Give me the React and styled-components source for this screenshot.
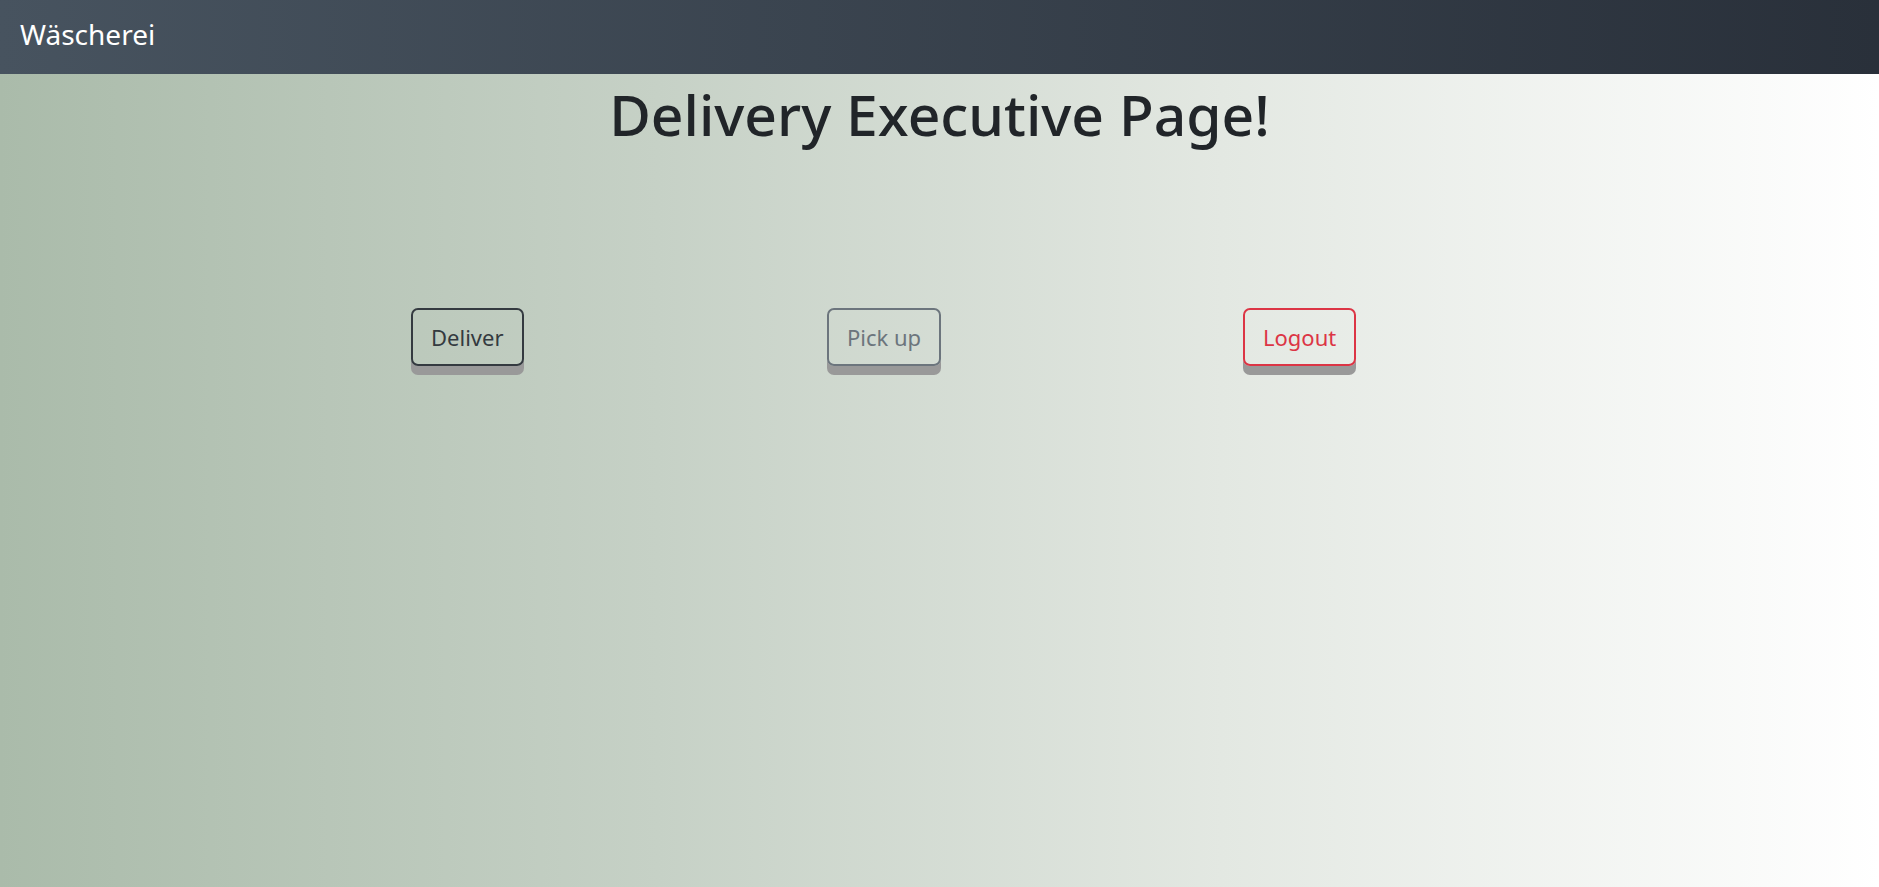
import React from "react";
import styled, { createGlobalStyle } from "styled-components";

const Global = createGlobalStyle`
  html, body { margin: 0; padding: 0; }
  body {
    font-family: "Noto Sans", "Open Sans", sans-serif;
    min-height: 887px;
    background: linear-gradient(to right, #aabbaa 0%, #c6d1c6 35%, #e3e8e2 65%, #ffffff 100%);
  }
`;

const Nav = styled.nav`
  height: 74px;
  display: flex;
  align-items: center;
  padding: 0 20px;
  box-sizing: border-box;
  background: linear-gradient(to right, #47535f, #29303a);
`;

const Brand = styled.span`
  color: #ffffff;
  font-size: 28px;
  line-height: 1;
  padding-bottom: 6px;
`;

const Title = styled.h1`
  margin: 6px 0 0;
  text-align: center;
  font-size: 57px;
  font-weight: 500;
  line-height: 1.2;
  color: #212529;
`;

const ButtonRow = styled.div`
  display: grid;
  grid-template-columns: repeat(3, 416px);
  padding-left: 411px;
  margin-top: 160px;
`;

const Button = styled.button`
  justify-self: start;
  font-family: inherit;
  font-size: 22px;
  line-height: 36px;
  padding: 9px 18px;
  background: transparent;
  border: 2px solid ${(p) => p.$color};
  color: ${(p) => p.$color};
  border-radius: 7px;
  box-shadow: 0 9px 0 #999999;
  cursor: pointer;
`;

export default function App() {
  return (
    <>
      <Global />
      <Nav>
        <Brand>Wäscherei</Brand>
      </Nav>
      <Title>Delivery Executive Page!</Title>
      <ButtonRow>
        <Button $color="#343a40">Deliver</Button>
        <Button $color="#6c757d">Pick up</Button>
        <Button $color="#dc3545">Logout</Button>
      </ButtonRow>
    </>
  );
}
